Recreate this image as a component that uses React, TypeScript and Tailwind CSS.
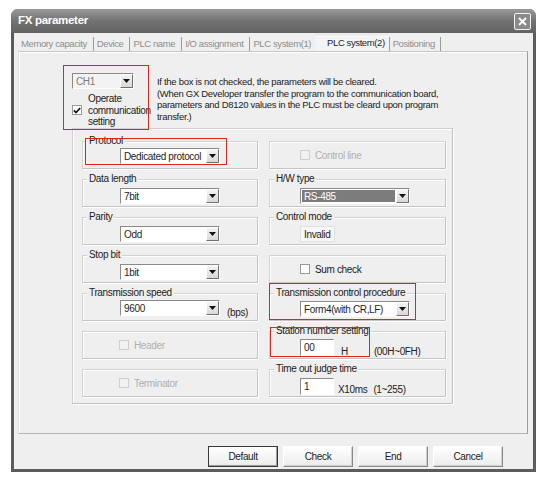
import React from 'react';

const font = "font-['Liberation_Sans',Arial,sans-serif]";

function Arrow() {
  return (
    <div className="w-[13px] h-full flex items-center justify-center bg-gradient-to-b from-[#f4f4f4] to-[#d8d8d8] border-l border-t border-white border-r border-b border-r-[#707070] border-b-[#707070]">
      <svg width="7" height="4" viewBox="0 0 7 4">
        <path d="M0 0h7L3.5 4z" fill="#111" />
      </svg>
    </div>
  );
}

function Select({ value, w, selected, disabled }: { value: string; w: string; selected?: boolean; disabled?: boolean }) {
  return (
    <div className={`${w} h-[16px] flex border border-t-[#8a8a8a] border-l-[#8a8a8a] border-r-white border-b-white ${disabled ? 'bg-[#f3f3f3]' : 'bg-white'}`}>
      <div className="flex-1 p-[1px] min-w-0">
        <div className={`h-full flex items-center pl-[2px] ${selected ? 'bg-[#7c7c7c] text-white' : disabled ? 'text-[#7a7a7a]' : 'text-[#1e1e1e]'}`}>
          {value}
        </div>
      </div>
      <Arrow />
    </div>
  );
}

function Check({ checked, disabled }: { checked?: boolean; disabled?: boolean }) {
  return (
    <div className={`w-[10px] h-[10px] shrink-0 flex items-center justify-center border ${disabled ? 'border-[#cfcfcf] bg-[#f1f1f1]' : 'border-[#9a9a9a] bg-white'}`}>
      {checked && (
        <svg width="8" height="7" viewBox="0 0 8 7">
          <path d="M0.8 3.4L3 5.6L7.2 1" stroke="#111" strokeWidth="1.6" fill="none" />
        </svg>
      )}
    </div>
  );
}

function Group({ label, children, className = '' }: { label?: string; children?: React.ReactNode; className?: string }) {
  return (
    <div className={`relative h-[28px] border border-t-[#d2d2d2] border-l-[#d2d2d2] border-r-[#c4c4c4] border-b-[#c4c4c4] shadow-[inset_1px_1px_0_#fff,1px_1px_0_#fff] ${className}`}>
      {label && (
        <span className="absolute -top-[7px] left-[4px] px-[2px] bg-[#efefef] leading-[12px] text-[#222] whitespace-nowrap">
          {label}
        </span>
      )}
      {children}
    </div>
  );
}

function Field({ value }: { value: string }) {
  return (
    <div className="w-[34px] h-[17px] bg-white border border-t-[#8a8a8a] border-l-[#8a8a8a] border-r-white border-b-white flex items-center pl-[3px] text-[#1e1e1e]">
      {value}
    </div>
  );
}

function Btn({ label, primary }: { label: string; primary?: boolean }) {
  return (
    <div
      className={`w-[70px] h-[21px] flex items-center justify-center text-[#222] bg-gradient-to-b from-white to-[#ececec] border ${
        primary
          ? 'border-[#3a3a3a] shadow-[inset_-1px_-1px_0_#9a9a9a]'
          : 'border-t-white border-l-white border-r-[#8a8a8a] border-b-[#8a8a8a] shadow-[inset_-1px_-1px_0_#d0d0d0]'
      }`}
    >
      {label}
    </div>
  );
}

const tabs = ['Memory capacity', 'Device', 'PLC name', 'I/O assignment'];

export default function App() {
  return (
    <div className={`w-[549px] h-[485px] bg-white pt-[9px] pl-[11px] text-[10px] tracking-[-0.35px] ${font}`}>
      <div className="w-[525px] h-[463px] flex flex-col rounded-t-[7px] bg-[#5c5c5c] overflow-hidden">
        {/* Title bar */}
        <div className="h-[24px] shrink-0 flex items-center justify-between pl-[7px] pr-[5px] bg-gradient-to-b from-[#9a9a9a] via-[#727272] to-[#636363]">
          <span className="text-white font-bold text-[11.5px] tracking-[-0.3px]">FX parameter</span>
          <div className="w-[17px] h-[17px] border border-[#f2f2f2] rounded-[2px] bg-[#8a8a8a] flex items-center justify-center">
            <svg width="9" height="9" viewBox="0 0 9 9">
              <path d="M1 1L8 8M8 1L1 8" stroke="#fff" strokeWidth="1.8" />
            </svg>
          </div>
        </div>

        {/* Body */}
        <div className="flex-1 mx-[3px] mb-[3px] bg-[#efefef] flex flex-col">
          {/* Tabs */}
          <div className="h-[17px] mt-[1px] pl-[4px] flex items-end text-[#8e8e8e] text-[9.5px] tracking-[-0.4px]">
            {tabs.map((t) => (
              <div key={t} className="h-[14px] pl-[3px] pr-[6px] border-r border-[#9c9c9c] flex items-center whitespace-nowrap">
                {t}
              </div>
            ))}
            <div className="h-[14px] pl-[3px] pr-[4px] flex items-center whitespace-nowrap">PLC system(1)</div>
            <div className="h-[17px] pl-[12px] pr-[4px] bg-[#f4f4f4] border-t border-[#e4e4e4] flex items-center text-[#1e1e1e] whitespace-nowrap">
              PLC system(2)
            </div>
            <div className="h-[14px] border-l border-[#9c9c9c] pl-[3px] pr-[5px] border-r flex items-center whitespace-nowrap">
              Positioning
            </div>
          </div>

          {/* Tab page */}
          <div className="relative ml-[4px] mr-[5px] h-[383px] border border-t-[#c6c6c6] border-l-[#e2e2e2] border-r-[#9e9e9e] border-b-[#b4b4b4] shadow-[inset_1px_1px_0_#fff]">
            <div className="h-[76px] pl-[53px] pt-[21px] flex text-[#222]">
              <div className="w-[85px] flex flex-col">
                <Select value="CH1" w="w-[62px]" disabled />
                <div className="flex items-center gap-[6px] mt-[4px]">
                  <Check checked />
                  <div className="leading-[11.5px]">
                    Operate
                    <br />
                    communication
                    <br />
                    setting
                  </div>
                </div>
              </div>
              <div className="mt-[3px] leading-[11.5px] text-[9.5px] tracking-[-0.3px] whitespace-nowrap">
                If the box is not checked, the parameters will be cleared.
                <br />
                (When GX Developer transfer the program to the communication board,
                <br />
                parameters and D8120 values in the PLC must be cleard upon program
                <br />
                transfer.)
              </div>
            </div>

            {/* Communication frame */}
            <div className="ml-[53px] w-[381px] h-[276px] border border-t-[#cfcfcf] border-l-[#cfcfcf] border-r-[#c0c0c0] border-b-[#c0c0c0] shadow-[inset_1px_1px_0_#fff,1px_1px_0_#fff] pl-[9px] pt-[12px]">
              <div className="grid grid-cols-[176px_177px] gap-x-[11px] gap-y-[10px] text-[#222]">
                <Group label="Protocol">
                  <div className="pl-[37px] pt-[6px]">
                    <Select value="Dedicated protocol" w="w-[100px]" />
                  </div>
                </Group>
                <Group>
                  <div className="h-full pl-[30px] flex items-center gap-[5px] text-[#b0b0b0]">
                    <Check disabled />
                    Control line
                  </div>
                </Group>

                <Group label="Data length">
                  <div className="pl-[37px] pt-[8px]">
                    <Select value="7bit" w="w-[100px]" />
                  </div>
                </Group>
                <Group label="H/W type">
                  <div className="pl-[30px] pt-[8px]">
                    <Select value="RS-485" w="w-[110px]" selected />
                  </div>
                </Group>

                <Group label="Parity">
                  <div className="pl-[37px] pt-[8px]">
                    <Select value="Odd" w="w-[100px]" />
                  </div>
                </Group>
                <Group label="Control mode">
                  <div className="pl-[30px] pt-[8px]">
                    <div className="w-[35px] h-[16px] bg-[#f7f7f7] border border-[#e2e2e2] flex items-center pl-[3px]">Invalid</div>
                  </div>
                </Group>

                <Group label="Stop bit">
                  <div className="pl-[37px] pt-[8px]">
                    <Select value="1bit" w="w-[100px]" />
                  </div>
                </Group>
                <Group>
                  <div className="h-full pl-[30px] flex items-center gap-[5px]">
                    <Check />
                    Sum check
                  </div>
                </Group>

                <Group label="Transmission speed">
                  <div className="pl-[37px] pt-[6px] flex items-end gap-[7px]">
                    <Select value="9600" w="w-[100px]" />
                    <span className="leading-[12px] -mb-[3px]">(bps)</span>
                  </div>
                </Group>
                <Group label="Transmission control procedure">
                  <div className="pl-[30px] pt-[7px]">
                    <Select value="Form4(with CR,LF)" w="w-[110px]" />
                  </div>
                </Group>

                <Group>
                  <div className="h-full pl-[36px] flex items-center gap-[5px] text-[#b0b0b0]">
                    <Check disabled />
                    Header
                  </div>
                </Group>
                <Group label="Station number setting">
                  <div className="pl-[30px] pt-[7px] flex items-end">
                    <Field value="00" />
                    <span className="ml-[7px] leading-[12px] -mb-[2px]">H</span>
                    <span className="ml-[26px] leading-[12px] -mb-[2px]">(00H~0FH)</span>
                  </div>
                </Group>

                <Group>
                  <div className="h-full pl-[36px] flex items-center gap-[5px] text-[#b0b0b0]">
                    <Check disabled />
                    Terminator
                  </div>
                </Group>
                <Group label="Time out judge time">
                  <div className="pl-[30px] pt-[8px] flex items-end">
                    <Field value="1" />
                    <span className="ml-[4px] leading-[12px] -mb-[1px]">X10ms</span>
                    <span className="ml-[6px] leading-[12px] -mb-[1px]">(1~255)</span>
                  </div>
                </Group>
              </div>
            </div>

            {/* Red annotation frames */}
            <div className="absolute left-[44px] top-[13px] w-[86px] h-[65px] border-[1.5px] border-[#e2231a]" />
            <div className="absolute left-[66px] top-[86px] w-[142px] h-[27px] border-[1.5px] border-[#e2231a]" />
            <div className="absolute left-[250px] top-[231px] w-[147px] h-[37px] border-[1.5px] border-[#e2231a]" />
            <div className="absolute left-[251px] top-[275px] w-[100px] h-[30px] border-[1.5px] border-[#e2231a]" />
          </div>

          {/* Buttons */}
          <div className="mt-[12px] pr-[30px] flex justify-end gap-[5px]">
            <Btn label="Default" primary />
            <Btn label="Check" />
            <Btn label="End" />
            <Btn label="Cancel" />
          </div>
        </div>
      </div>
    </div>
  );
}
